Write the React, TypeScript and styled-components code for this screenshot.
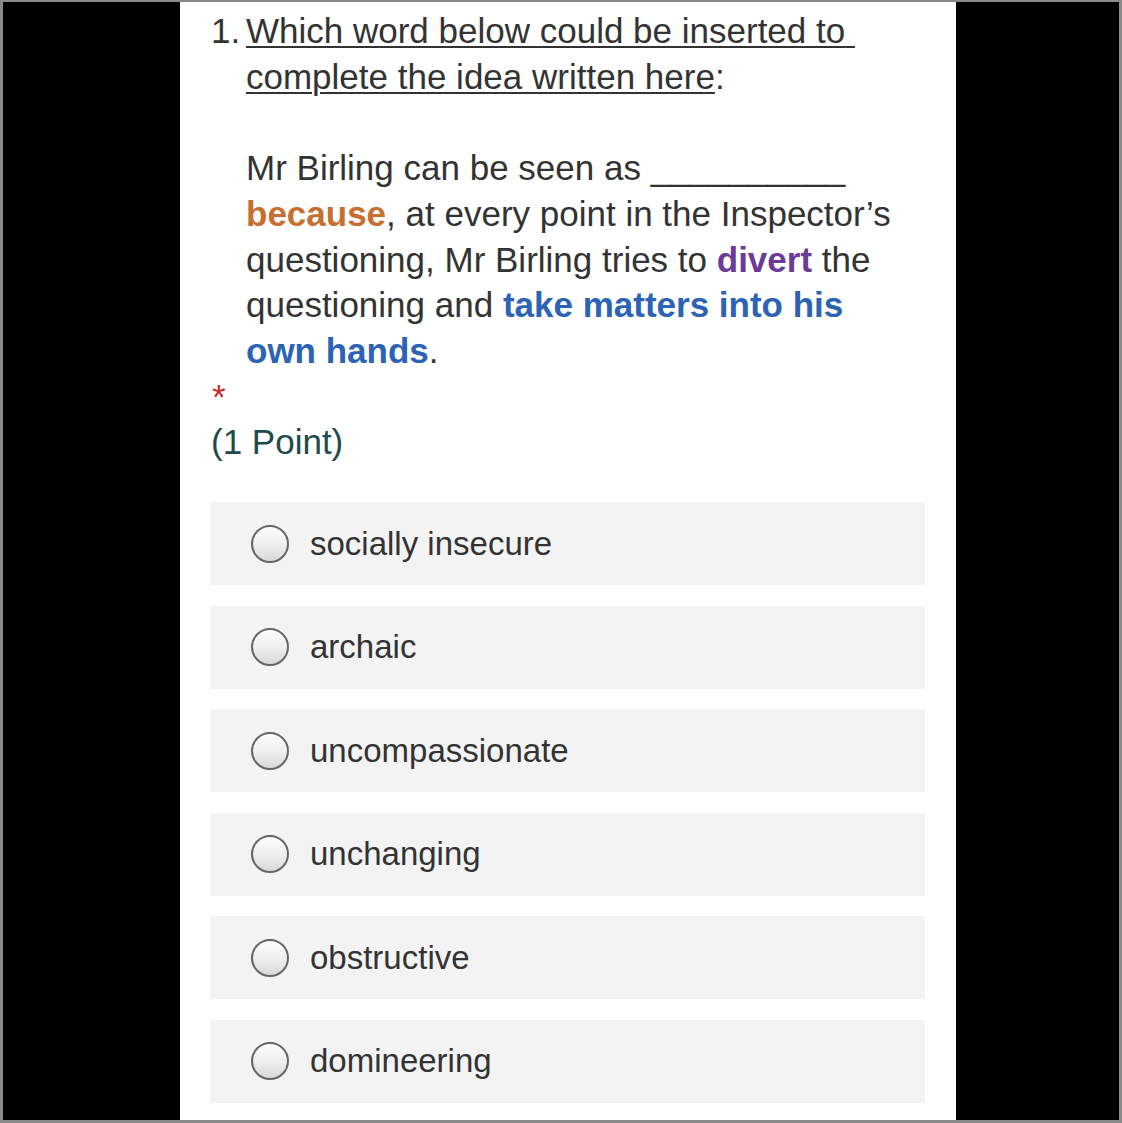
import React from "react";
import styled, { createGlobalStyle } from "styled-components";

const GlobalStyle = createGlobalStyle`
  html, body {
    margin: 0;
    padding: 0;
    background: #000;
  }
  * { box-sizing: border-box; }
`;

const Frame = styled.div`
  width: 1122px;
  height: 1123px;
  background: #000;
  border-style: solid;
  border-color: #8a8a8a;
  border-width: 2px 3px 3px 3px;
  display: grid;
  grid-template-columns: 177px 776px 1fr;
  overflow: hidden;
`;

const Column = styled.main`
  grid-column: 2;
  background: #fff;
  padding: 6px 31px 0 30px;
  font-family: "Liberation Sans", Arial, Helvetica, sans-serif;
  color: #333;
`;

const QuestionRow = styled.div`
  display: flex;
  font-size: 35px;
  line-height: 45.7px;
  padding-left: 1px;
`;

const Number = styled.span`
  flex: 0 0 35px;
`;

const QuestionText = styled.div`
  flex: 1;
  padding-right: 20px;
`;

const Title = styled.span`
  text-decoration: underline;
  text-decoration-thickness: 2px;
  text-underline-offset: 3px;
`;

const Body = styled.p`
  margin: 45.7px 0 0;
`;

const Emph = styled.b<{ $tone: "orange" | "purple" | "blue" }>`
  font-weight: 700;
  color: ${(p) =>
    p.$tone === "orange" ? "#c86f30" : p.$tone === "purple" ? "#6c3a97" : "#2c63b6"};
`;

const Required = styled.div`
  font-size: 35px;
  line-height: 45.7px;
  color: #c42b2b;
  padding-left: 2px;
`;

const Points = styled.div`
  font-size: 35px;
  line-height: 45.7px;
  color: #1e4b4b;
  padding-left: 1px;
`;

const Options = styled.div`
  display: flex;
  flex-direction: column;
  gap: 20.6px;
  margin-top: 37px;
`;

const Option = styled.label`
  display: flex;
  align-items: center;
  gap: 21px;
  height: 83px;
  padding-left: 41px;
  background: #f3f3f3;
  font-size: 33px;
  color: #333;
`;

const Radio = styled.span`
  flex: 0 0 38px;
  width: 38px;
  height: 38px;
  border-radius: 50%;
  border: 2px solid #666;
  background: linear-gradient(to bottom, #fdfdfd 0%, #eeeeee 55%, #d8d8d8 100%);
`;

const choices = [
  "socially insecure",
  "archaic",
  "uncompassionate",
  "unchanging",
  "obstructive",
  "domineering",
];

export default function App() {
  return (
    <>
      <GlobalStyle />
      <Frame>
        <Column>
          <QuestionRow>
            <Number>1.</Number>
            <QuestionText>
              <Title>
                Which word below could be inserted to{"\u00A0"} complete the idea written here
              </Title>
              :
              <Body>
                Mr Birling can be seen as __________{" "}
                <Emph $tone="orange">because</Emph>, at every point in the Inspector’s
                questioning, Mr Birling tries to <Emph $tone="purple">divert</Emph> the
                questioning and <Emph $tone="blue">take matters into his own hands</Emph>.
              </Body>
            </QuestionText>
          </QuestionRow>
          <Required>*</Required>
          <Points>(1 Point)</Points>
          <Options>
            {choices.map((c) => (
              <Option key={c}>
                <Radio />
                {c}
              </Option>
            ))}
          </Options>
        </Column>
      </Frame>
    </>
  );
}
